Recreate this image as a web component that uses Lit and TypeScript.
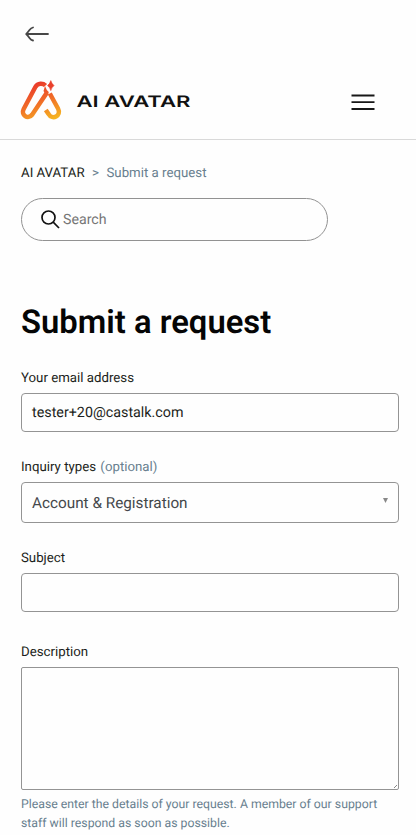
import { LitElement, html, css } from "lit";
import { customElement } from "lit/decorators.js";

@customElement("app-root")
export class AppRoot extends LitElement {
  static styles = css`
    :host { display: block; height: 835px; overflow: hidden; background: #fefefe; color: #1c1e20; font-family: Roboto, sans-serif; text-rendering: geometricPrecision; }
    * { box-sizing: border-box; }
    svg { display: block; }
    .topbar { height: 68px; padding: 26px 0 0 25px; }
    .header { height: 72px; border-bottom: 1px solid #d9d9d9; display: flex; align-items: flex-start; padding: 12px 41px 0 20px; }
    .word { margin: 12px 0 0 10px; }
    .menu { margin: 14px 0 0 auto; }
    .content { padding: 0 17px 0 21px; }
    .crumbs { display: flex; height: 16px; margin-top: 26px; font-size: 13.25px; line-height: 16px; white-space: pre; color: #68808f; }
    .crumbs b { font-weight: 400; color: #1c1e20; width: 71px; }
    .crumbs i { font-style: normal; width: 14.5px; }
    .search { display: flex; align-items: center; width: 307px; height: 43px; margin-top: 16px; padding-left: 19px; border: 1px solid #929292; border-radius: 22px; font-size: 14.2px; color: #767676; }
    .search svg { margin-right: 3px; }
    h1 { margin: 62px 0 0; height: 40px; font-size: 32.8px; line-height: 40px; font-weight: 600; color: #050505; white-space: nowrap; }
    .label { height: 16px; font-size: 13.25px; line-height: 16px; white-space: pre; }
    .label span { color: #68808f; margin-left: 1px; }
    .box { border: 1px solid #949494; border-radius: 4px; margin-top: 6px; width: 378px; display: flex; align-items: center; padding: 0 10px; font-size: 14.3px; }
    .l1 { margin-top: 28px; }
    .l2 { margin-top: 28px; }
    .l3 { margin-top: 28px; }
    .l4 { margin-top: 33px; }
    .email { height: 39px; }
    .select { height: 41px; font-size: 15.3px; color: #45484b; justify-content: space-between; }
    .select span { margin-top: 1px; }
    .select svg { margin-top: -5px; }
    .subject { height: 39px; }
    .desc { height: 123px; border-radius: 2px; align-items: flex-end; justify-content: flex-end; padding: 0 1px 1px; }
    .hint { margin: 5px 0 0; font-size: 12.27px; line-height: 18.5px; color: #68808f; white-space: nowrap; }
  `;

  render() {
    return html`
      <div class="topbar">
        <svg width="24" height="16" viewBox="0 0 24 16" fill="none" stroke="#474747" stroke-width="1.8" stroke-linecap="round" stroke-linejoin="round">
          <path d="M23 8H1.500M8 1.500Q6 2 4.500 4T1.200 8Q3 9.800 4.500 12T8 14.500" />
        </svg>
      </div>
      <header class="header">
        <svg width="42" height="40" viewBox="0 0 42 40" fill="none">
          <defs>
            <linearGradient id="flame" x1="14" y1="1" x2="29" y2="40" gradientUnits="userSpaceOnUse">
              <stop offset="0" stop-color="#e9342b" />
              <stop offset=".5" stop-color="#f06a28" />
              <stop offset="1" stop-color="#f6b321" />
            </linearGradient>
          </defs>
          <path d="M25.500 5.500C23 3 17.800 2.800 15.500 6.800L3.700 29C.5 35 8 40 12.300 34.500L27 12.500" stroke="url(#flame)" stroke-width="4.500" />
          <path d="M29.800 13.500 38 28.500C42 36 32 40.500 28.500 34L25.800 30" stroke="url(#flame)" stroke-width="4.500" />
          <path d="M25 6Q26.500 10.500 29 12.300L26 15 23.500 11Z" fill="url(#flame)" />
          <path d="M30.800 .6Q31.800 4 34 5.600Q31.800 7.200 30.800 10.600Q29.800 7.200 27.600 5.600Q29.800 4 30.800 .6Z" fill="#e9402b" stroke="#e9402b" stroke-width=".6" />
        </svg>
        <svg class="word" width="124" height="20" viewBox="0 0 124 20">
          <text x="4.500" y="15.200" textLength="114" lengthAdjust="spacingAndGlyphs" font-family="Inter, sans-serif" font-weight="600" font-size="15.700" fill="#111">AI AVATAR</text>
        </svg>
        <svg class="menu" width="24" height="17" viewBox="0 0 24 17" stroke="#171717" stroke-width="1.800"><path d="M0.500 1.500H23.500M.5 8.200H23.500M.5 15H23.500" /></svg>
      </header>
      <main class="content">
        <nav class="crumbs"><b>AI AVATAR</b><i>&gt;</i><span>Submit a request</span></nav>
        <div class="search">
          <svg width="19" height="19" viewBox="0 0 19 19" fill="none" stroke="#111" stroke-width="1.700"><circle cx="7.500" cy="7.500" r="6.500" /><path d="m12.200 12.200 5.800 5.800" /></svg>
          <span>Search</span>
        </div>
        <h1>Submit a request</h1>
        <div class="label l1">Your email address</div>
        <div class="box email">tester+20@castalk.com</div>
        <div class="label l2">Inquiry types <span>(optional)</span></div>
        <div class="box select"><span>Account &amp; Registration</span>
          <svg width="5" height="5" viewBox="0 0 5 5"><path d="M0 0H5L2.500 5Z" fill="#888" /></svg>
        </div>
        <div class="label l3">Subject</div>
        <div class="box subject"></div>
        <div class="label l4">Description</div>
        <div class="box desc"><svg width="3" height="3" viewBox="0 0 3 3"><path d="M0 3 3 0" stroke="#888" /></svg></div>
        <p class="hint">Please enter the details of your request. A member of our support<br />staff will respond as soon as possible.</p>
      </main>
    `;
  }
}
